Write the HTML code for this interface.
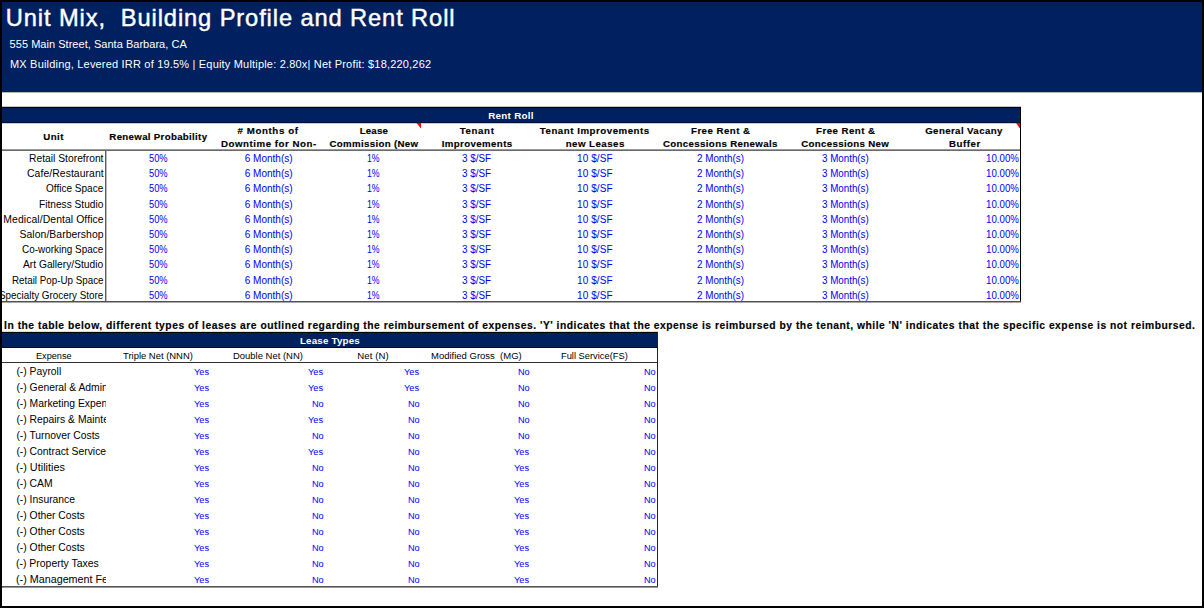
<!DOCTYPE html>
<html><head><meta charset="utf-8"><style>
html,body{margin:0;padding:0;background:#fff;}
body{width:1204px;height:608px;position:relative;overflow:hidden;font-family:"Liberation Sans",sans-serif;}
.r{position:absolute;}
.t{position:absolute;white-space:pre;line-height:20px;transform-origin:0 0;}
.clip{position:absolute;overflow:hidden;}
.frame{position:absolute;left:0;top:0;width:1200px;height:604px;border:2px solid #000;}
</style></head><body>
<div class="r" style="left:2px;top:2px;width:1200px;height:90px;background:#002060"></div><div class="r" style="left:2px;top:92px;width:1200px;height:1px;background:#b4b4b4"></div><div class="r" style="left:2px;top:106px;width:1019px;height:1px;background:#c8c8c8"></div><div class="r" style="left:2px;top:107px;width:1019px;height:1px;background:#000010"></div><div class="r" style="left:2px;top:108px;width:1019px;height:14px;background:#002060"></div><div class="r" style="left:2px;top:122px;width:1019px;height:1px;background:#00103a"></div><div class="r" style="left:2px;top:123px;width:1019px;height:1px;background:#c4cadc"></div><div class="r" style="left:2px;top:149px;width:1019px;height:1px;background:#9a9a9a"></div><div class="r" style="left:2px;top:150px;width:1019px;height:1px;background:#6a6a6a"></div><div class="r" style="left:105px;top:151px;width:1px;height:151px;background:#606060"></div><div class="r" style="left:106px;top:151px;width:1px;height:151px;background:#b8b8b8"></div><div class="r" style="left:1020px;top:107px;width:1px;height:196px;background:#000"></div><div class="r" style="left:2px;top:301px;width:1019px;height:1px;background:#505050"></div><div class="r" style="left:2px;top:302px;width:1019px;height:1px;background:#a8a8a8"></div><div class="r" style="left:2px;top:331px;width:656px;height:1px;background:#dcdcdc"></div><div class="r" style="left:2px;top:332px;width:656px;height:1px;background:#000"></div><div class="r" style="left:2px;top:333px;width:656px;height:14px;background:#002060"></div><div class="r" style="left:2px;top:347px;width:656px;height:1px;background:#000820"></div><div class="r" style="left:2px;top:362px;width:656px;height:1px;background:#303030"></div><div class="r" style="left:657px;top:332px;width:1px;height:256px;background:#222"></div><div class="r" style="left:2px;top:586px;width:656px;height:1px;background:#555"></div><div class="r" style="left:2px;top:587px;width:656px;height:1px;background:#999"></div>
<svg class="r" style="left:0;top:0" width="1204" height="608">
<polygon points="416.5,123 421,123 421,128.5" fill="#ff0000"/>
<polygon points="1016,123 1020,123 1020,128.5" fill="#ff0000"/>
</svg>
<div class="t" style="left:5.80px;top:8.00px;font-size:23.7px;color:#fff;letter-spacing:0.884px;-webkit-text-stroke:0.45px #fff">Unit Mix,  Building Profile and Rent Roll</div><div class="t" style="left:9.60px;top:34.00px;font-size:11.0px;color:#fff;letter-spacing:0.032px">555 Main Street, Santa Barbara, CA</div><div class="t" style="left:10.00px;top:54.00px;font-size:11.0px;color:#fff;letter-spacing:0.189px">MX Building, Levered IRR of 19.5% | Equity Multiple: 2.80x| Net Profit: $18,220,262</div><div class="t" style="left:488.15px;top:106.00px;font-size:9.8px;color:#fff;font-weight:bold;letter-spacing:0.303px">Rent Roll</div><div class="t" style="left:43.35px;top:127.00px;font-size:9.7px;color:#000;font-weight:bold;letter-spacing:0.432px;-webkit-text-stroke:0.15px #000">Unit</div><div class="t" style="left:109.35px;top:127.00px;font-size:9.7px;color:#000;font-weight:bold;letter-spacing:0.313px;-webkit-text-stroke:0.15px #000">Renewal Probability</div><div class="t" style="left:237.50px;top:121.00px;font-size:9.7px;color:#000;font-weight:bold;letter-spacing:0.608px;-webkit-text-stroke:0.15px #000"># Months of</div><div class="t" style="left:221.00px;top:134.00px;font-size:9.7px;color:#000;font-weight:bold;letter-spacing:0.537px;-webkit-text-stroke:0.15px #000">Downtime for Non-</div><div class="t" style="left:359.65px;top:121.00px;font-size:9.7px;color:#000;font-weight:bold;letter-spacing:0.205px;-webkit-text-stroke:0.15px #000">Lease</div><div class="t" style="left:329.50px;top:134.00px;font-size:9.7px;color:#000;font-weight:bold;letter-spacing:0.326px;-webkit-text-stroke:0.15px #000">Commission (New</div><div class="t" style="left:459.75px;top:121.00px;font-size:9.7px;color:#000;font-weight:bold;letter-spacing:0.618px;-webkit-text-stroke:0.15px #000">Tenant</div><div class="t" style="left:441.65px;top:134.00px;font-size:9.7px;color:#000;font-weight:bold;letter-spacing:0.388px;-webkit-text-stroke:0.15px #000">Improvements</div><div class="t" style="left:539.80px;top:121.00px;font-size:9.7px;color:#000;font-weight:bold;letter-spacing:0.525px;-webkit-text-stroke:0.15px #000">Tenant Improvements</div><div class="t" style="left:565.70px;top:134.00px;font-size:9.7px;color:#000;font-weight:bold;letter-spacing:0.467px;-webkit-text-stroke:0.15px #000">new Leases</div><div class="t" style="left:691.00px;top:121.00px;font-size:9.7px;color:#000;font-weight:bold;letter-spacing:0.463px;-webkit-text-stroke:0.15px #000">Free Rent &amp;</div><div class="t" style="left:662.95px;top:134.00px;font-size:9.7px;color:#000;font-weight:bold;letter-spacing:0.358px;-webkit-text-stroke:0.15px #000">Concessions Renewals</div><div class="t" style="left:816.10px;top:121.00px;font-size:9.7px;color:#000;font-weight:bold;letter-spacing:0.463px;-webkit-text-stroke:0.15px #000">Free Rent &amp;</div><div class="t" style="left:801.20px;top:134.00px;font-size:9.7px;color:#000;font-weight:bold;letter-spacing:0.331px;-webkit-text-stroke:0.15px #000">Concessions New</div><div class="t" style="left:925.20px;top:121.00px;font-size:9.7px;color:#000;font-weight:bold;letter-spacing:0.386px;-webkit-text-stroke:0.15px #000">General Vacany</div><div class="t" style="left:949.00px;top:134.00px;font-size:9.7px;color:#000;font-weight:bold;letter-spacing:0.529px;-webkit-text-stroke:0.15px #000">Buffer</div><div class="clip" style="left:2px;width:103px;top:149.00px;height:20px"><div class="t" style="left:27.20px;top:0px;font-size:10.4px;color:#000;transform:scaleX(0.9921)">Retail Storefront</div></div><div class="t" style="left:149.25px;top:149.00px;font-size:10.0px;color:#0000ff;transform:scaleX(0.9293)">50%</div><div class="t" style="left:244.75px;top:149.00px;font-size:10.0px;color:#0000ff">6 Month(s)</div><div class="t" style="left:367.35px;top:149.00px;font-size:10.0px;color:#0000ff;transform:scaleX(0.8722)">1%</div><div class="t" style="left:462.00px;top:149.00px;font-size:10.0px;color:#0000ff;transform:scaleX(0.9881)">3 $/SF</div><div class="t" style="left:577.00px;top:149.00px;font-size:10.0px;color:#0000ff;letter-spacing:0.081px">10 $/SF</div><div class="t" style="left:696.65px;top:149.00px;font-size:10.0px;color:#0000ff;transform:scaleX(0.9839)">2 Month(s)</div><div class="t" style="left:822.00px;top:149.00px;font-size:10.0px;color:#0000ff;transform:scaleX(0.9776)">3 Month(s)</div><div class="t" style="left:985.50px;top:149.00px;font-size:10.0px;color:#0000ff;transform:scaleX(0.9699)">10.00%</div><div class="clip" style="left:2px;width:103px;top:164.00px;height:20px"><div class="t" style="left:25.00px;top:0px;font-size:10.4px;color:#000;letter-spacing:0.073px">Cafe/Restaurant</div></div><div class="t" style="left:149.25px;top:164.00px;font-size:10.0px;color:#0000ff;transform:scaleX(0.9293)">50%</div><div class="t" style="left:244.75px;top:164.00px;font-size:10.0px;color:#0000ff">6 Month(s)</div><div class="t" style="left:367.35px;top:164.00px;font-size:10.0px;color:#0000ff;transform:scaleX(0.8722)">1%</div><div class="t" style="left:462.00px;top:164.00px;font-size:10.0px;color:#0000ff;transform:scaleX(0.9881)">3 $/SF</div><div class="t" style="left:577.00px;top:164.00px;font-size:10.0px;color:#0000ff;letter-spacing:0.081px">10 $/SF</div><div class="t" style="left:696.65px;top:164.00px;font-size:10.0px;color:#0000ff;transform:scaleX(0.9839)">2 Month(s)</div><div class="t" style="left:822.00px;top:164.00px;font-size:10.0px;color:#0000ff;transform:scaleX(0.9776)">3 Month(s)</div><div class="t" style="left:985.50px;top:164.00px;font-size:10.0px;color:#0000ff;transform:scaleX(0.9699)">10.00%</div><div class="clip" style="left:2px;width:103px;top:179.00px;height:20px"><div class="t" style="left:44.30px;top:0px;font-size:10.4px;color:#000;transform:scaleX(0.9660)">Office Space</div></div><div class="t" style="left:149.25px;top:179.00px;font-size:10.0px;color:#0000ff;transform:scaleX(0.9293)">50%</div><div class="t" style="left:244.75px;top:179.00px;font-size:10.0px;color:#0000ff">6 Month(s)</div><div class="t" style="left:367.35px;top:179.00px;font-size:10.0px;color:#0000ff;transform:scaleX(0.8722)">1%</div><div class="t" style="left:462.00px;top:179.00px;font-size:10.0px;color:#0000ff;transform:scaleX(0.9881)">3 $/SF</div><div class="t" style="left:577.00px;top:179.00px;font-size:10.0px;color:#0000ff;letter-spacing:0.081px">10 $/SF</div><div class="t" style="left:696.65px;top:179.00px;font-size:10.0px;color:#0000ff;transform:scaleX(0.9839)">2 Month(s)</div><div class="t" style="left:822.00px;top:179.00px;font-size:10.0px;color:#0000ff;transform:scaleX(0.9776)">3 Month(s)</div><div class="t" style="left:985.50px;top:179.00px;font-size:10.0px;color:#0000ff;transform:scaleX(0.9699)">10.00%</div><div class="clip" style="left:2px;width:103px;top:195.00px;height:20px"><div class="t" style="left:37.20px;top:0px;font-size:10.4px;color:#000;transform:scaleX(0.9779)">Fitness Studio</div></div><div class="t" style="left:149.25px;top:195.00px;font-size:10.0px;color:#0000ff;transform:scaleX(0.9293)">50%</div><div class="t" style="left:244.75px;top:195.00px;font-size:10.0px;color:#0000ff">6 Month(s)</div><div class="t" style="left:367.35px;top:195.00px;font-size:10.0px;color:#0000ff;transform:scaleX(0.8722)">1%</div><div class="t" style="left:462.00px;top:195.00px;font-size:10.0px;color:#0000ff;transform:scaleX(0.9881)">3 $/SF</div><div class="t" style="left:577.00px;top:195.00px;font-size:10.0px;color:#0000ff;letter-spacing:0.081px">10 $/SF</div><div class="t" style="left:696.65px;top:195.00px;font-size:10.0px;color:#0000ff;transform:scaleX(0.9839)">2 Month(s)</div><div class="t" style="left:822.00px;top:195.00px;font-size:10.0px;color:#0000ff;transform:scaleX(0.9776)">3 Month(s)</div><div class="t" style="left:985.50px;top:195.00px;font-size:10.0px;color:#0000ff;transform:scaleX(0.9699)">10.00%</div><div class="clip" style="left:2px;width:103px;top:210.00px;height:20px"><div class="t" style="left:1.30px;top:0px;font-size:10.4px;color:#000;letter-spacing:0.086px">Medical/Dental Office</div></div><div class="t" style="left:149.25px;top:210.00px;font-size:10.0px;color:#0000ff;transform:scaleX(0.9293)">50%</div><div class="t" style="left:244.75px;top:210.00px;font-size:10.0px;color:#0000ff">6 Month(s)</div><div class="t" style="left:367.35px;top:210.00px;font-size:10.0px;color:#0000ff;transform:scaleX(0.8722)">1%</div><div class="t" style="left:462.00px;top:210.00px;font-size:10.0px;color:#0000ff;transform:scaleX(0.9881)">3 $/SF</div><div class="t" style="left:577.00px;top:210.00px;font-size:10.0px;color:#0000ff;letter-spacing:0.081px">10 $/SF</div><div class="t" style="left:696.65px;top:210.00px;font-size:10.0px;color:#0000ff;transform:scaleX(0.9839)">2 Month(s)</div><div class="t" style="left:822.00px;top:210.00px;font-size:10.0px;color:#0000ff;transform:scaleX(0.9776)">3 Month(s)</div><div class="t" style="left:985.50px;top:210.00px;font-size:10.0px;color:#0000ff;transform:scaleX(0.9699)">10.00%</div><div class="clip" style="left:2px;width:103px;top:225.00px;height:20px"><div class="t" style="left:17.50px;top:0px;font-size:10.4px;color:#000;letter-spacing:0.060px">Salon/Barbershop</div></div><div class="t" style="left:149.25px;top:225.00px;font-size:10.0px;color:#0000ff;transform:scaleX(0.9293)">50%</div><div class="t" style="left:244.75px;top:225.00px;font-size:10.0px;color:#0000ff">6 Month(s)</div><div class="t" style="left:367.35px;top:225.00px;font-size:10.0px;color:#0000ff;transform:scaleX(0.8722)">1%</div><div class="t" style="left:462.00px;top:225.00px;font-size:10.0px;color:#0000ff;transform:scaleX(0.9881)">3 $/SF</div><div class="t" style="left:577.00px;top:225.00px;font-size:10.0px;color:#0000ff;letter-spacing:0.081px">10 $/SF</div><div class="t" style="left:696.65px;top:225.00px;font-size:10.0px;color:#0000ff;transform:scaleX(0.9839)">2 Month(s)</div><div class="t" style="left:822.00px;top:225.00px;font-size:10.0px;color:#0000ff;transform:scaleX(0.9776)">3 Month(s)</div><div class="t" style="left:985.50px;top:225.00px;font-size:10.0px;color:#0000ff;transform:scaleX(0.9699)">10.00%</div><div class="clip" style="left:2px;width:103px;top:240.00px;height:20px"><div class="t" style="left:20.40px;top:0px;font-size:10.4px;color:#000;transform:scaleX(0.9563)">Co-working Space</div></div><div class="t" style="left:149.25px;top:240.00px;font-size:10.0px;color:#0000ff;transform:scaleX(0.9293)">50%</div><div class="t" style="left:244.75px;top:240.00px;font-size:10.0px;color:#0000ff">6 Month(s)</div><div class="t" style="left:367.35px;top:240.00px;font-size:10.0px;color:#0000ff;transform:scaleX(0.8722)">1%</div><div class="t" style="left:462.00px;top:240.00px;font-size:10.0px;color:#0000ff;transform:scaleX(0.9881)">3 $/SF</div><div class="t" style="left:577.00px;top:240.00px;font-size:10.0px;color:#0000ff;letter-spacing:0.081px">10 $/SF</div><div class="t" style="left:696.65px;top:240.00px;font-size:10.0px;color:#0000ff;transform:scaleX(0.9839)">2 Month(s)</div><div class="t" style="left:822.00px;top:240.00px;font-size:10.0px;color:#0000ff;transform:scaleX(0.9776)">3 Month(s)</div><div class="t" style="left:985.50px;top:240.00px;font-size:10.0px;color:#0000ff;transform:scaleX(0.9699)">10.00%</div><div class="clip" style="left:2px;width:103px;top:255.00px;height:20px"><div class="t" style="left:21.40px;top:0px;font-size:10.4px;color:#000;transform:scaleX(0.9847)">Art Gallery/Studio</div></div><div class="t" style="left:149.25px;top:255.00px;font-size:10.0px;color:#0000ff;transform:scaleX(0.9293)">50%</div><div class="t" style="left:244.75px;top:255.00px;font-size:10.0px;color:#0000ff">6 Month(s)</div><div class="t" style="left:367.35px;top:255.00px;font-size:10.0px;color:#0000ff;transform:scaleX(0.8722)">1%</div><div class="t" style="left:462.00px;top:255.00px;font-size:10.0px;color:#0000ff;transform:scaleX(0.9881)">3 $/SF</div><div class="t" style="left:577.00px;top:255.00px;font-size:10.0px;color:#0000ff;letter-spacing:0.081px">10 $/SF</div><div class="t" style="left:696.65px;top:255.00px;font-size:10.0px;color:#0000ff;transform:scaleX(0.9839)">2 Month(s)</div><div class="t" style="left:822.00px;top:255.00px;font-size:10.0px;color:#0000ff;transform:scaleX(0.9776)">3 Month(s)</div><div class="t" style="left:985.50px;top:255.00px;font-size:10.0px;color:#0000ff;transform:scaleX(0.9699)">10.00%</div><div class="clip" style="left:2px;width:103px;top:271.00px;height:20px"><div class="t" style="left:10.10px;top:0px;font-size:10.4px;color:#000;transform:scaleX(0.9429)">Retail Pop-Up Space</div></div><div class="t" style="left:149.25px;top:271.00px;font-size:10.0px;color:#0000ff;transform:scaleX(0.9293)">50%</div><div class="t" style="left:244.75px;top:271.00px;font-size:10.0px;color:#0000ff">6 Month(s)</div><div class="t" style="left:367.35px;top:271.00px;font-size:10.0px;color:#0000ff;transform:scaleX(0.8722)">1%</div><div class="t" style="left:462.00px;top:271.00px;font-size:10.0px;color:#0000ff;transform:scaleX(0.9881)">3 $/SF</div><div class="t" style="left:577.00px;top:271.00px;font-size:10.0px;color:#0000ff;letter-spacing:0.081px">10 $/SF</div><div class="t" style="left:696.65px;top:271.00px;font-size:10.0px;color:#0000ff;transform:scaleX(0.9839)">2 Month(s)</div><div class="t" style="left:822.00px;top:271.00px;font-size:10.0px;color:#0000ff;transform:scaleX(0.9776)">3 Month(s)</div><div class="t" style="left:985.50px;top:271.00px;font-size:10.0px;color:#0000ff;transform:scaleX(0.9699)">10.00%</div><div class="clip" style="left:2px;width:103px;top:286.00px;height:20px"><div class="t" style="left:-2.70px;top:0px;font-size:10.4px;color:#000;transform:scaleX(0.9505)">Specialty Grocery Store</div></div><div class="t" style="left:149.25px;top:286.00px;font-size:10.0px;color:#0000ff;transform:scaleX(0.9293)">50%</div><div class="t" style="left:244.75px;top:286.00px;font-size:10.0px;color:#0000ff">6 Month(s)</div><div class="t" style="left:367.35px;top:286.00px;font-size:10.0px;color:#0000ff;transform:scaleX(0.8722)">1%</div><div class="t" style="left:462.00px;top:286.00px;font-size:10.0px;color:#0000ff;transform:scaleX(0.9881)">3 $/SF</div><div class="t" style="left:577.00px;top:286.00px;font-size:10.0px;color:#0000ff;letter-spacing:0.081px">10 $/SF</div><div class="t" style="left:696.65px;top:286.00px;font-size:10.0px;color:#0000ff;transform:scaleX(0.9839)">2 Month(s)</div><div class="t" style="left:822.00px;top:286.00px;font-size:10.0px;color:#0000ff;transform:scaleX(0.9776)">3 Month(s)</div><div class="t" style="left:985.50px;top:286.00px;font-size:10.0px;color:#0000ff;transform:scaleX(0.9699)">10.00%</div><div class="t" style="left:4.10px;top:316.00px;font-size:10.3px;color:#000;font-weight:bold;letter-spacing:0.510px;-webkit-text-stroke:0.15px #000">In the table below, different types of leases are outlined regarding the reimbursement of expenses. &#x27;Y&#x27; indicates that the expense is reimbursed by the tenant, while &#x27;N&#x27; indicates that the specific expense is not reimbursed.</div><div class="t" style="left:299.90px;top:331.00px;font-size:9.8px;color:#fff;font-weight:bold;letter-spacing:0.176px">Lease Types</div><div class="t" style="left:35.75px;top:346.00px;font-size:9.6px;color:#000;transform:scaleX(0.9541)">Expense</div><div class="t" style="left:123.05px;top:346.00px;font-size:9.6px;color:#000;transform:scaleX(0.9835)">Triple Net (NNN)</div><div class="t" style="left:233.35px;top:346.00px;font-size:9.6px;color:#000;transform:scaleX(0.9857)">Double Net (NN)</div><div class="t" style="left:357.20px;top:346.00px;font-size:9.6px;color:#000;letter-spacing:0.114px">Net (N)</div><div class="t" style="left:431.05px;top:346.00px;font-size:9.6px;color:#000;transform:scaleX(0.9891)">Modified Gross  (MG)</div><div class="t" style="left:561.40px;top:346.00px;font-size:9.6px;color:#000;transform:scaleX(0.9713)">Full Service(FS)</div><div class="clip" style="left:2px;width:104px;top:362.00px;height:20px"><div class="t" style="left:14.40px;top:0px;font-size:10.35px;color:#000">(-) Payroll</div></div><div class="t" style="left:193.70px;top:362.00px;font-size:9.6px;color:#0000ff;transform:scaleX(0.9651)">Yes</div><div class="t" style="left:308.00px;top:362.00px;font-size:9.6px;color:#0000ff;transform:scaleX(0.9651)">Yes</div><div class="t" style="left:403.70px;top:362.00px;font-size:9.6px;color:#0000ff;transform:scaleX(0.9651)">Yes</div><div class="t" style="left:518.10px;top:362.00px;font-size:9.6px;color:#0000ff;transform:scaleX(0.9557)">No</div><div class="t" style="left:644.00px;top:362.00px;font-size:9.6px;color:#0000ff;transform:scaleX(0.9557)">No</div><div class="clip" style="left:2px;width:104px;top:378.00px;height:20px"><div class="t" style="left:14.40px;top:0px;font-size:10.35px;color:#000">(-) General &amp; Administrative</div></div><div class="t" style="left:193.70px;top:378.00px;font-size:9.6px;color:#0000ff;transform:scaleX(0.9651)">Yes</div><div class="t" style="left:308.00px;top:378.00px;font-size:9.6px;color:#0000ff;transform:scaleX(0.9651)">Yes</div><div class="t" style="left:403.70px;top:378.00px;font-size:9.6px;color:#0000ff;transform:scaleX(0.9651)">Yes</div><div class="t" style="left:518.10px;top:378.00px;font-size:9.6px;color:#0000ff;transform:scaleX(0.9557)">No</div><div class="t" style="left:644.00px;top:378.00px;font-size:9.6px;color:#0000ff;transform:scaleX(0.9557)">No</div><div class="clip" style="left:2px;width:104px;top:394.00px;height:20px"><div class="t" style="left:14.40px;top:0px;font-size:10.35px;color:#000">(-) Marketing Expenses</div></div><div class="t" style="left:193.70px;top:394.00px;font-size:9.6px;color:#0000ff;transform:scaleX(0.9651)">Yes</div><div class="t" style="left:311.90px;top:394.00px;font-size:9.6px;color:#0000ff;transform:scaleX(0.9557)">No</div><div class="t" style="left:407.60px;top:394.00px;font-size:9.6px;color:#0000ff;transform:scaleX(0.9557)">No</div><div class="t" style="left:518.10px;top:394.00px;font-size:9.6px;color:#0000ff;transform:scaleX(0.9557)">No</div><div class="t" style="left:644.00px;top:394.00px;font-size:9.6px;color:#0000ff;transform:scaleX(0.9557)">No</div><div class="clip" style="left:2px;width:104px;top:410.00px;height:20px"><div class="t" style="left:14.40px;top:0px;font-size:10.35px;color:#000">(-) Repairs &amp; Maintenance</div></div><div class="t" style="left:193.70px;top:410.00px;font-size:9.6px;color:#0000ff;transform:scaleX(0.9651)">Yes</div><div class="t" style="left:308.00px;top:410.00px;font-size:9.6px;color:#0000ff;transform:scaleX(0.9651)">Yes</div><div class="t" style="left:407.60px;top:410.00px;font-size:9.6px;color:#0000ff;transform:scaleX(0.9557)">No</div><div class="t" style="left:518.10px;top:410.00px;font-size:9.6px;color:#0000ff;transform:scaleX(0.9557)">No</div><div class="t" style="left:644.00px;top:410.00px;font-size:9.6px;color:#0000ff;transform:scaleX(0.9557)">No</div><div class="clip" style="left:2px;width:104px;top:426.00px;height:20px"><div class="t" style="left:14.40px;top:0px;font-size:10.35px;color:#000">(-) Turnover Costs</div></div><div class="t" style="left:193.70px;top:426.00px;font-size:9.6px;color:#0000ff;transform:scaleX(0.9651)">Yes</div><div class="t" style="left:311.90px;top:426.00px;font-size:9.6px;color:#0000ff;transform:scaleX(0.9557)">No</div><div class="t" style="left:407.60px;top:426.00px;font-size:9.6px;color:#0000ff;transform:scaleX(0.9557)">No</div><div class="t" style="left:518.10px;top:426.00px;font-size:9.6px;color:#0000ff;transform:scaleX(0.9557)">No</div><div class="t" style="left:644.00px;top:426.00px;font-size:9.6px;color:#0000ff;transform:scaleX(0.9557)">No</div><div class="clip" style="left:2px;width:104px;top:442.00px;height:20px"><div class="t" style="left:14.40px;top:0px;font-size:10.35px;color:#000">(-) Contract Services</div></div><div class="t" style="left:193.70px;top:442.00px;font-size:9.6px;color:#0000ff;transform:scaleX(0.9651)">Yes</div><div class="t" style="left:308.00px;top:442.00px;font-size:9.6px;color:#0000ff;transform:scaleX(0.9651)">Yes</div><div class="t" style="left:407.60px;top:442.00px;font-size:9.6px;color:#0000ff;transform:scaleX(0.9557)">No</div><div class="t" style="left:514.20px;top:442.00px;font-size:9.6px;color:#0000ff;transform:scaleX(0.9651)">Yes</div><div class="t" style="left:644.00px;top:442.00px;font-size:9.6px;color:#0000ff;transform:scaleX(0.9557)">No</div><div class="clip" style="left:2px;width:104px;top:458.00px;height:20px"><div class="t" style="left:14.40px;top:0px;font-size:10.35px;color:#000;transform:scaleX(1.0500)">(-) Utilities</div></div><div class="t" style="left:193.70px;top:458.00px;font-size:9.6px;color:#0000ff;transform:scaleX(0.9651)">Yes</div><div class="t" style="left:311.90px;top:458.00px;font-size:9.6px;color:#0000ff;transform:scaleX(0.9557)">No</div><div class="t" style="left:407.60px;top:458.00px;font-size:9.6px;color:#0000ff;transform:scaleX(0.9557)">No</div><div class="t" style="left:514.20px;top:458.00px;font-size:9.6px;color:#0000ff;transform:scaleX(0.9651)">Yes</div><div class="t" style="left:644.00px;top:458.00px;font-size:9.6px;color:#0000ff;transform:scaleX(0.9557)">No</div><div class="clip" style="left:2px;width:104px;top:474.00px;height:20px"><div class="t" style="left:14.40px;top:0px;font-size:10.35px;color:#000">(-) CAM</div></div><div class="t" style="left:193.70px;top:474.00px;font-size:9.6px;color:#0000ff;transform:scaleX(0.9651)">Yes</div><div class="t" style="left:311.90px;top:474.00px;font-size:9.6px;color:#0000ff;transform:scaleX(0.9557)">No</div><div class="t" style="left:407.60px;top:474.00px;font-size:9.6px;color:#0000ff;transform:scaleX(0.9557)">No</div><div class="t" style="left:514.20px;top:474.00px;font-size:9.6px;color:#0000ff;transform:scaleX(0.9651)">Yes</div><div class="t" style="left:644.00px;top:474.00px;font-size:9.6px;color:#0000ff;transform:scaleX(0.9557)">No</div><div class="clip" style="left:2px;width:104px;top:490.00px;height:20px"><div class="t" style="left:14.40px;top:0px;font-size:10.35px;color:#000">(-) Insurance</div></div><div class="t" style="left:193.70px;top:490.00px;font-size:9.6px;color:#0000ff;transform:scaleX(0.9651)">Yes</div><div class="t" style="left:311.90px;top:490.00px;font-size:9.6px;color:#0000ff;transform:scaleX(0.9557)">No</div><div class="t" style="left:407.60px;top:490.00px;font-size:9.6px;color:#0000ff;transform:scaleX(0.9557)">No</div><div class="t" style="left:514.20px;top:490.00px;font-size:9.6px;color:#0000ff;transform:scaleX(0.9651)">Yes</div><div class="t" style="left:644.00px;top:490.00px;font-size:9.6px;color:#0000ff;transform:scaleX(0.9557)">No</div><div class="clip" style="left:2px;width:104px;top:506.00px;height:20px"><div class="t" style="left:14.40px;top:0px;font-size:10.35px;color:#000">(-) Other Costs</div></div><div class="t" style="left:193.70px;top:506.00px;font-size:9.6px;color:#0000ff;transform:scaleX(0.9651)">Yes</div><div class="t" style="left:311.90px;top:506.00px;font-size:9.6px;color:#0000ff;transform:scaleX(0.9557)">No</div><div class="t" style="left:407.60px;top:506.00px;font-size:9.6px;color:#0000ff;transform:scaleX(0.9557)">No</div><div class="t" style="left:514.20px;top:506.00px;font-size:9.6px;color:#0000ff;transform:scaleX(0.9651)">Yes</div><div class="t" style="left:644.00px;top:506.00px;font-size:9.6px;color:#0000ff;transform:scaleX(0.9557)">No</div><div class="clip" style="left:2px;width:104px;top:522.00px;height:20px"><div class="t" style="left:14.40px;top:0px;font-size:10.35px;color:#000">(-) Other Costs</div></div><div class="t" style="left:193.70px;top:522.00px;font-size:9.6px;color:#0000ff;transform:scaleX(0.9651)">Yes</div><div class="t" style="left:311.90px;top:522.00px;font-size:9.6px;color:#0000ff;transform:scaleX(0.9557)">No</div><div class="t" style="left:407.60px;top:522.00px;font-size:9.6px;color:#0000ff;transform:scaleX(0.9557)">No</div><div class="t" style="left:514.20px;top:522.00px;font-size:9.6px;color:#0000ff;transform:scaleX(0.9651)">Yes</div><div class="t" style="left:644.00px;top:522.00px;font-size:9.6px;color:#0000ff;transform:scaleX(0.9557)">No</div><div class="clip" style="left:2px;width:104px;top:538.00px;height:20px"><div class="t" style="left:14.40px;top:0px;font-size:10.35px;color:#000">(-) Other Costs</div></div><div class="t" style="left:193.70px;top:538.00px;font-size:9.6px;color:#0000ff;transform:scaleX(0.9651)">Yes</div><div class="t" style="left:311.90px;top:538.00px;font-size:9.6px;color:#0000ff;transform:scaleX(0.9557)">No</div><div class="t" style="left:407.60px;top:538.00px;font-size:9.6px;color:#0000ff;transform:scaleX(0.9557)">No</div><div class="t" style="left:514.20px;top:538.00px;font-size:9.6px;color:#0000ff;transform:scaleX(0.9651)">Yes</div><div class="t" style="left:644.00px;top:538.00px;font-size:9.6px;color:#0000ff;transform:scaleX(0.9557)">No</div><div class="clip" style="left:2px;width:104px;top:554.00px;height:20px"><div class="t" style="left:14.40px;top:0px;font-size:10.35px;color:#000;transform:scaleX(1.0100)">(-) Property Taxes</div></div><div class="t" style="left:193.70px;top:554.00px;font-size:9.6px;color:#0000ff;transform:scaleX(0.9651)">Yes</div><div class="t" style="left:311.90px;top:554.00px;font-size:9.6px;color:#0000ff;transform:scaleX(0.9557)">No</div><div class="t" style="left:407.60px;top:554.00px;font-size:9.6px;color:#0000ff;transform:scaleX(0.9557)">No</div><div class="t" style="left:514.20px;top:554.00px;font-size:9.6px;color:#0000ff;transform:scaleX(0.9651)">Yes</div><div class="t" style="left:644.00px;top:554.00px;font-size:9.6px;color:#0000ff;transform:scaleX(0.9557)">No</div><div class="clip" style="left:2px;width:104px;top:570.00px;height:20px"><div class="t" style="left:14.40px;top:0px;font-size:10.35px;color:#000;transform:scaleX(1.0400)">(-) Management Fees</div></div><div class="t" style="left:193.70px;top:570.00px;font-size:9.6px;color:#0000ff;transform:scaleX(0.9651)">Yes</div><div class="t" style="left:311.90px;top:570.00px;font-size:9.6px;color:#0000ff;transform:scaleX(0.9557)">No</div><div class="t" style="left:407.60px;top:570.00px;font-size:9.6px;color:#0000ff;transform:scaleX(0.9557)">No</div><div class="t" style="left:514.20px;top:570.00px;font-size:9.6px;color:#0000ff;transform:scaleX(0.9651)">Yes</div><div class="t" style="left:644.00px;top:570.00px;font-size:9.6px;color:#0000ff;transform:scaleX(0.9557)">No</div>
<div class="frame"></div>
</body></html>
